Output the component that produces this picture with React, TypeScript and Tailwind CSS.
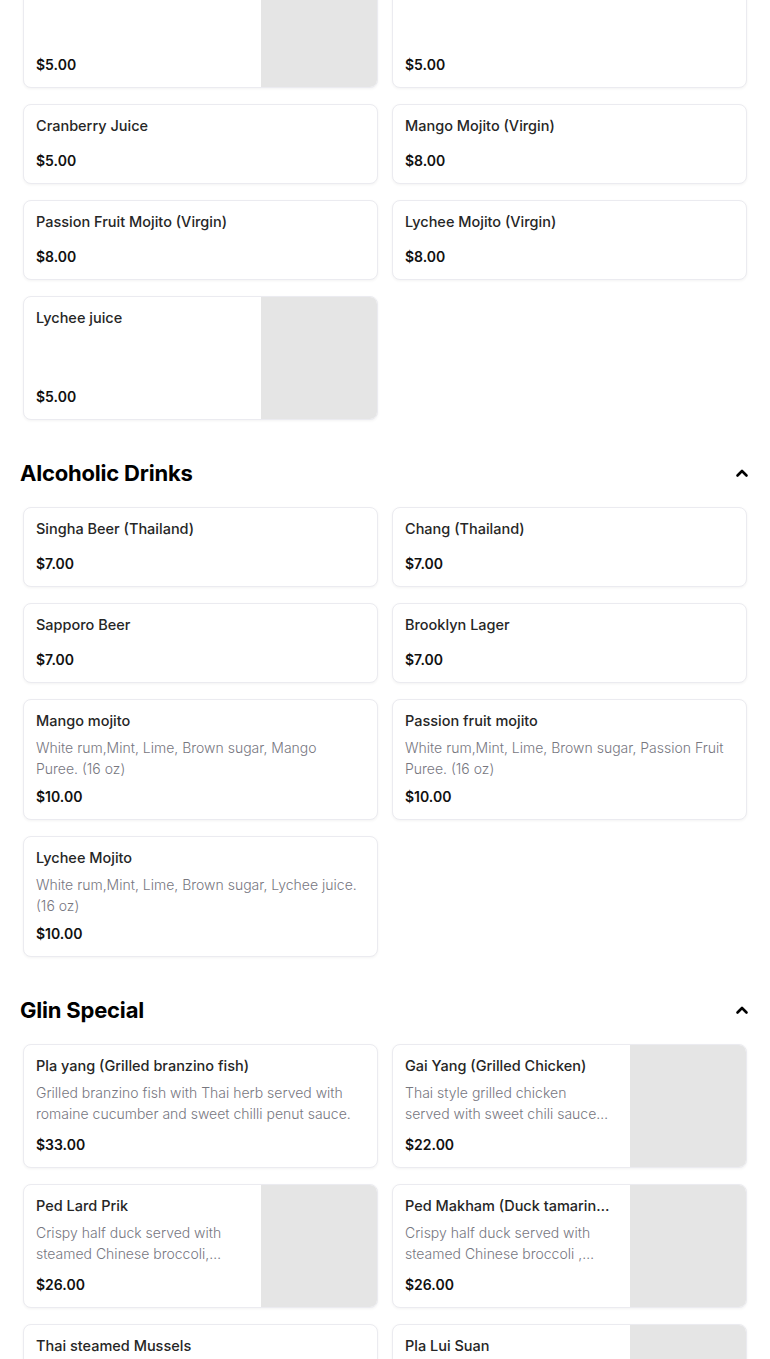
import React from "react";

type Item = {
  name: string;
  price: string;
  desc?: string;
  img?: boolean;
};

const softDrinks: Item[] = [
  { name: "Thai Iced Tea", price: "$5.00", img: true },
  { name: "Coke", price: "$5.00" },
  { name: "Cranberry Juice", price: "$5.00" },
  { name: "Mango Mojito (Virgin)", price: "$8.00" },
  { name: "Passion Fruit Mojito (Virgin)", price: "$8.00" },
  { name: "Lychee Mojito (Virgin)", price: "$8.00" },
  { name: "Lychee juice", price: "$5.00", img: true },
];

const alcoholicDrinks: Item[] = [
  { name: "Singha Beer (Thailand)", price: "$7.00" },
  { name: "Chang (Thailand)", price: "$7.00" },
  { name: "Sapporo Beer", price: "$7.00" },
  { name: "Brooklyn Lager", price: "$7.00" },
  {
    name: "Mango mojito",
    desc: "White rum,Mint, Lime, Brown sugar, Mango Puree. (16 oz)",
    price: "$10.00",
  },
  {
    name: "Passion fruit mojito",
    desc: "White rum,Mint, Lime, Brown sugar, Passion Fruit Puree. (16 oz)",
    price: "$10.00",
  },
  {
    name: "Lychee Mojito",
    desc: "White rum,Mint, Lime, Brown sugar, Lychee juice. (16 oz)",
    price: "$10.00",
  },
];

const glinSpecial: Item[] = [
  {
    name: "Pla yang (Grilled branzino fish)",
    desc: "Grilled branzino fish with Thai herb served with romaine cucumber and sweet chilli penut sauce.",
    price: "$33.00",
  },
  {
    name: "Gai Yang (Grilled Chicken)",
    desc: "Thai style grilled chicken served with sweet chili sauce and sticky rice.",
    price: "$22.00",
    img: true,
  },
  {
    name: "Ped Lard Prik",
    desc: "Crispy half duck served with steamed Chinese broccoli, topped with chili sauce.",
    price: "$26.00",
    img: true,
  },
  {
    name: "Ped Makham (Duck tamarind sauce)",
    desc: "Crispy half duck served with steamed Chinese broccoli , topped with tamarind sauce.",
    price: "$26.00",
    img: true,
  },
  {
    name: "Thai steamed Mussels",
    desc: "Steamed mussels with lemongrass, galangal, kaffir lime leaves and Thai basil.",
    price: "$21.00",
  },
  {
    name: "Pla Lui Suan",
    desc: "Crispy whole fish topped with mango salad and cashew nuts.",
    price: "$32.00",
    img: true,
  },
];

const MenuCard = ({ item }: { item: Item }) => {
  return (
    <div
      className={
        "flex overflow-hidden rounded-lg border border-[#ebebf0] bg-white shadow-[0_1px_3px_rgba(0,0,0,0.05)] " +
        (item.img ? "min-h-[124px]" : "")
      }
    >
      <div
        className={
          "flex min-w-0 flex-1 flex-col pb-3 pl-3 pt-[11px] " +
          (item.img ? "pr-5" : "pr-[19px]")
        }
      >
        <p className="truncate text-[14.5px] font-medium leading-5 text-[#262626]">
          {item.name}
        </p>
        {item.desc && (
          <p
            className={
              "mt-[7px] text-[14px] font-light leading-[20.5px] text-[#77777f] " +
              (item.img ? "line-clamp-2" : "")
            }
          >
            {item.desc}
          </p>
        )}
        <p
          className={
            "mt-auto text-[14px] font-semibold leading-5 text-[#111] " +
            (item.desc ? "pt-2" : "pt-[15px]")
          }
        >
          {item.price}
        </p>
      </div>
      {item.img && <div className="w-[116px] shrink-0 bg-[#e5e5e5]" />}
    </div>
  );
};

const ChevronUp = () => (
  <svg width="14" height="10" viewBox="0 0 14 10" fill="none">
    <polyline
      points="2.5,7.5 7,3 11.5,7.5"
      stroke="#000"
      strokeWidth="2.6"
      strokeLinecap="round"
      strokeLinejoin="round"
    />
  </svg>
);

const Section = ({
  title,
  items,
  first,
}: {
  title: string;
  items: Item[];
  first?: boolean;
}) => {
  return (
    <section className={first ? "-mt-[36px]" : "mt-[39px]"}>
      {!first && (
        <div className="mb-5 flex items-center justify-between pl-5 pr-[21px]">
          <h2 className="text-[22px] font-bold leading-7 tracking-[-0.2px] text-black">
            {title}
          </h2>
          <ChevronUp />
        </div>
      )}
      <div className="grid grid-cols-2 gap-x-[14px] gap-y-4 px-[23px]">
        {items.map((item) => (
          <MenuCard key={item.name} item={item} />
        ))}
      </div>
    </section>
  );
};

export default function App() {
  return (
    <main className="h-[1359px] overflow-hidden bg-white font-['Inter','Noto_Sans',sans-serif]">
      <Section title="Soft Drinks" items={softDrinks} first />
      <Section title="Alcoholic Drinks" items={alcoholicDrinks} />
      <Section title="Glin Special" items={glinSpecial} />
    </main>
  );
}
